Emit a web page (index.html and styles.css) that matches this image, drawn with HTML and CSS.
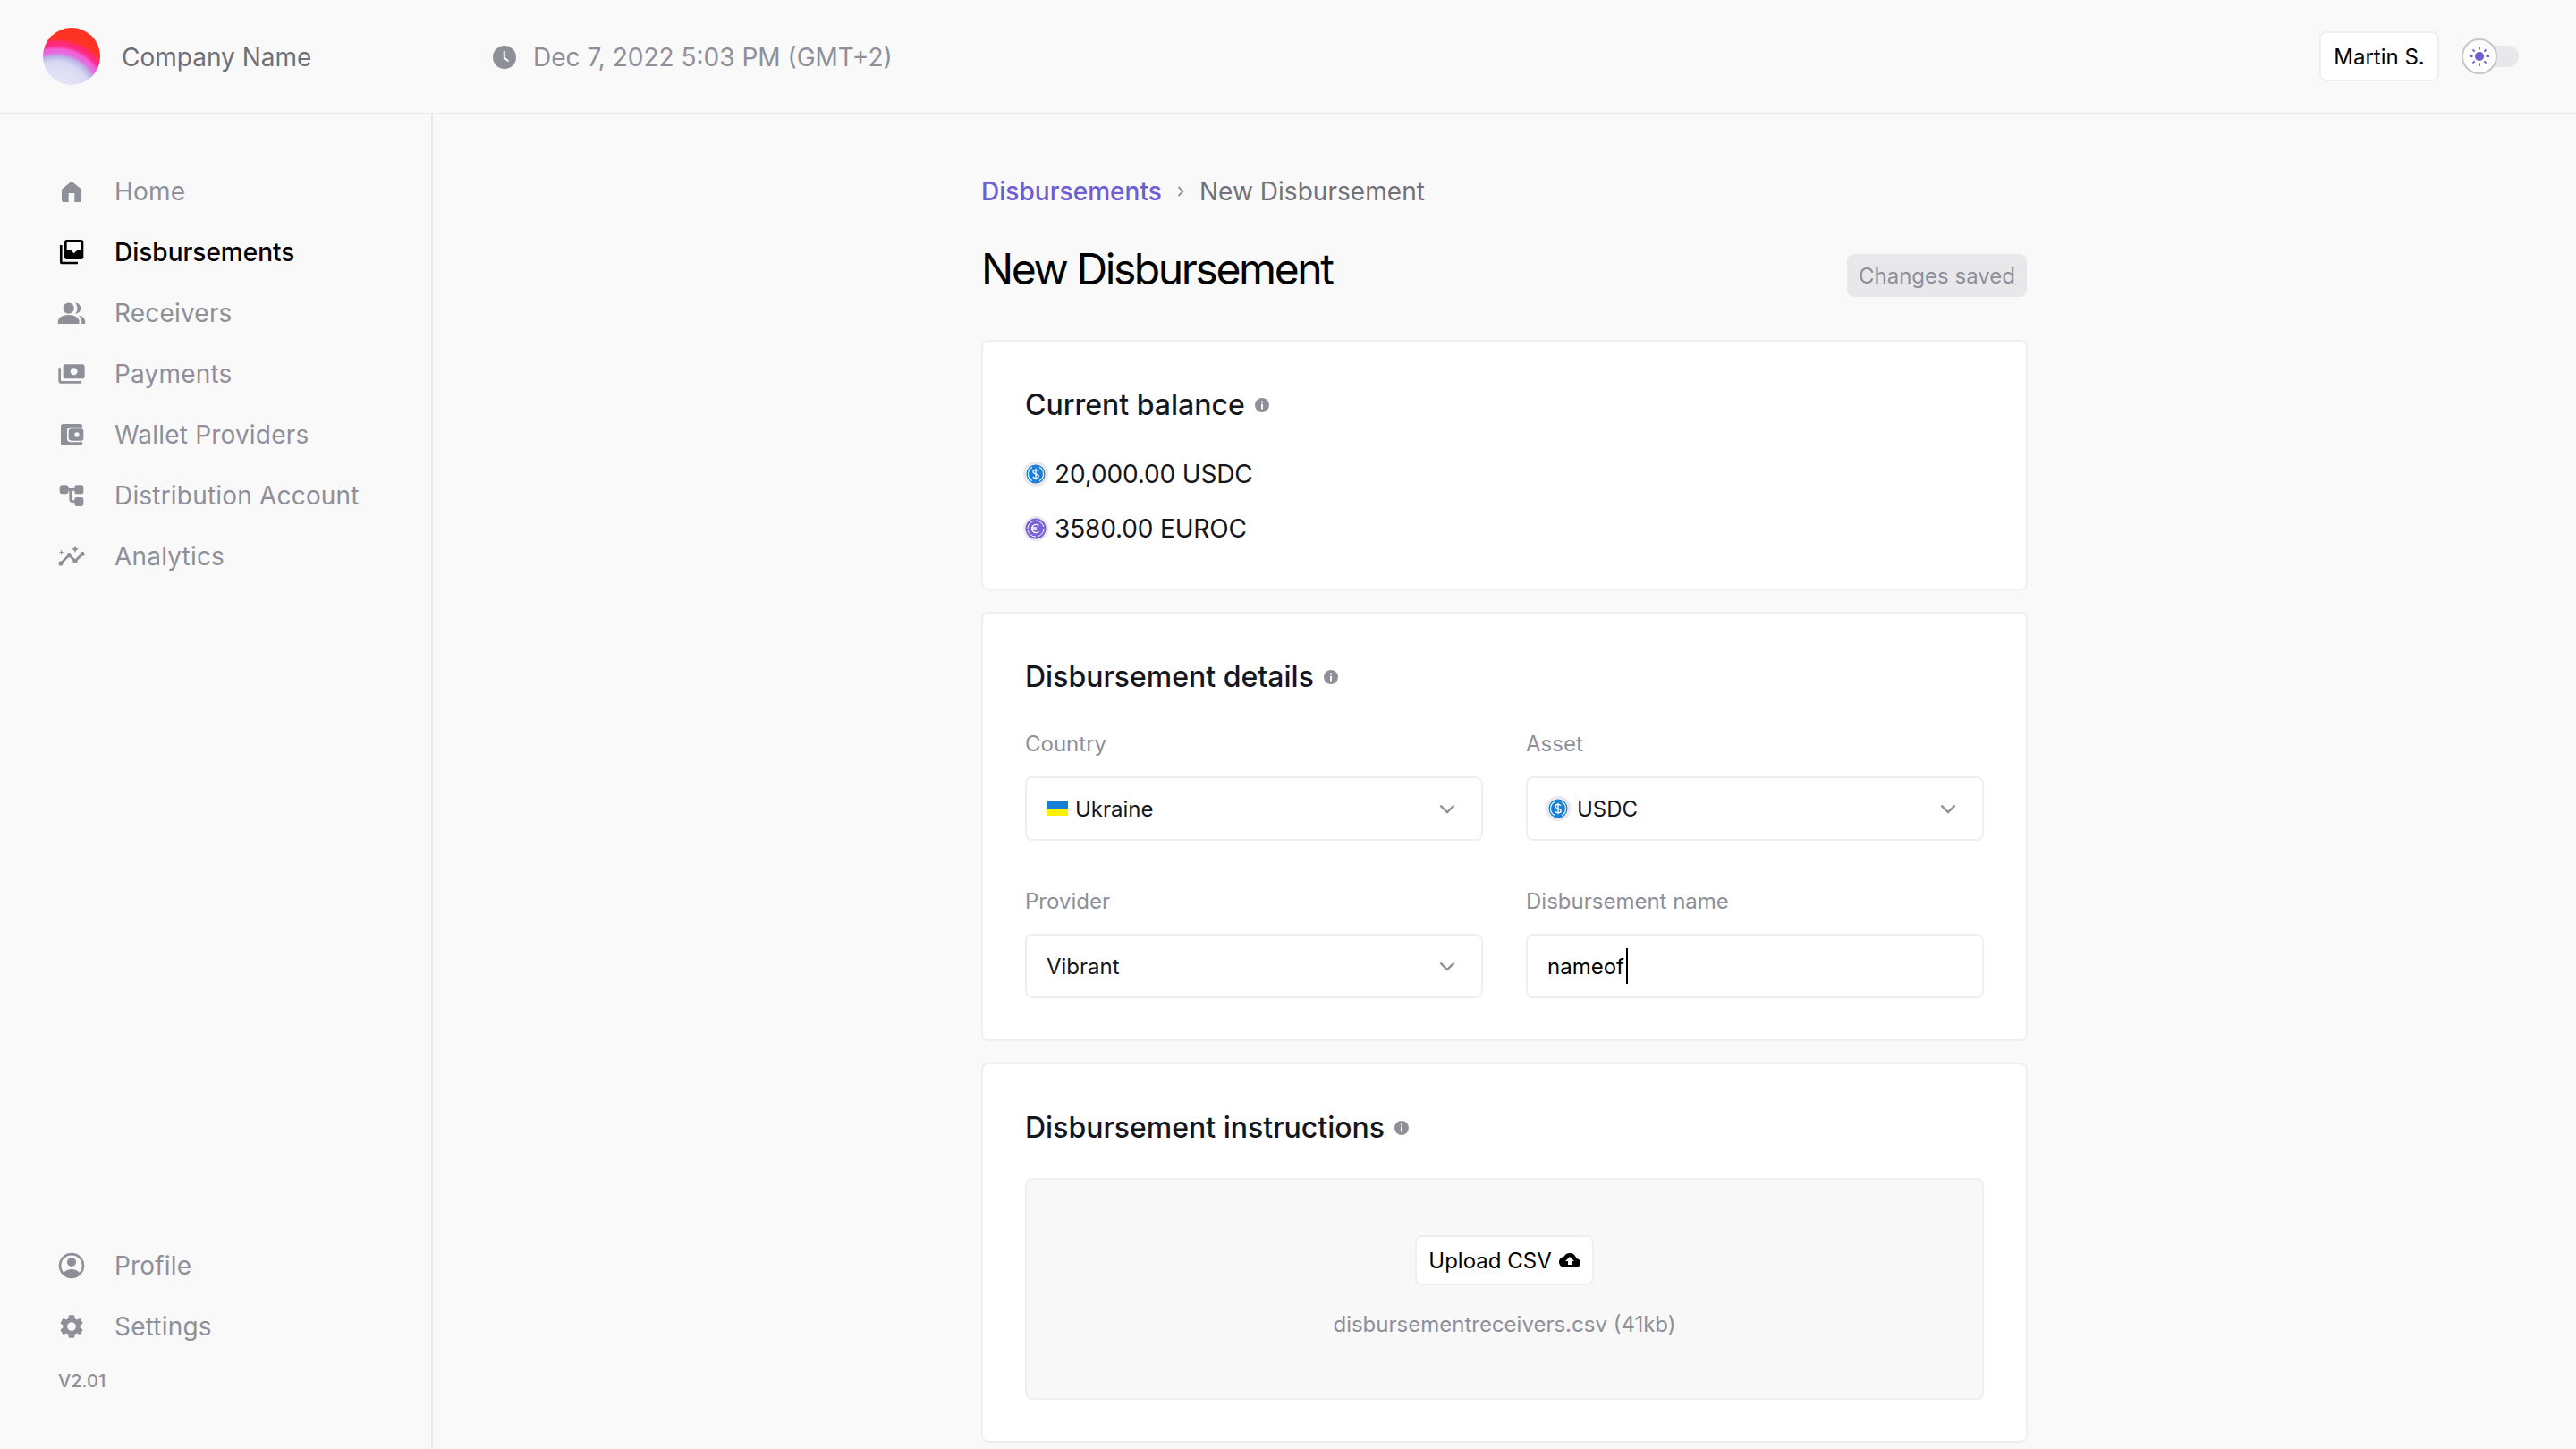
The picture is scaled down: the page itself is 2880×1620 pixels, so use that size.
FILE: index.html
```html
<!DOCTYPE html>
<html lang="en">
<head>
<meta charset="utf-8">
<title>New Disbursement</title>
<link rel="stylesheet" href="styles.css">
</head>
<body>
<svg class="defs" width="0" height="0" aria-hidden="true">
  <defs>
    <symbol id="info" viewBox="0 0 16 16"><path fill-rule="evenodd" d="M8 0a8 8 0 1 1 0 16A8 8 0 0 1 8 0zM7 3.400v2h2v-2zM7 6.800v5.800h2V6.800z"/></symbol>
    <symbol id="chev" viewBox="0 0 16 16"><path d="M2.500 5.500 8 11l5.500-5.500" fill="none" stroke="currentColor" stroke-width="1.700"/></symbol>
    <symbol id="usdc" viewBox="0 0 28 28">
      <circle cx="14" cy="14" r="14" fill="#e9e9ec"/>
      <circle cx="14" cy="14" r="10.500" fill="#1a7fd9"/>
      <path d="M10 6.500a8.500 8.500 0 0 0 0 15M18 6.500a8.500 8.500 0 0 1 0 15" fill="none" stroke="#fff" stroke-width="1.100"/>
      <path d="M17 10.800c-.6-1-1.700-1.500-3-1.500-1.800 0-3 .9-3 2.300 0 3.300 6.200 1.600 6.200 4.800 0 1.400-1.300 2.300-3.200 2.300-1.400 0-2.600-.6-3.200-1.600M14 7.800v12.400" fill="none" stroke="#fff" stroke-width="1.300"/>
    </symbol>
    <symbol id="euroc" viewBox="0 0 28 28">
      <circle cx="14" cy="14" r="14" fill="#e9e9f3"/>
      <circle cx="14" cy="14" r="11.500" fill="#7a62d6"/>
      <circle cx="14" cy="14" r="9" fill="none" stroke="#fff" stroke-width="1" stroke-dasharray="12 2"/>
      <path d="M17.500 10.800a4.600 4.600 0 1 0 0 6.400M9 13h6M9 15h6" fill="none" stroke="#fff" stroke-width="1.300"/>
    </symbol>
  </defs>
</svg>
<div class="app">
  <header class="topbar">
    <div class="brand">
      <span class="logo"></span>
      <span class="brand-name">Company Name</span>
    </div>
    <div class="clock">
      <svg class="clock-icon" viewBox="0 0 26 26"><path fill-rule="evenodd" d="M13 0a13 13 0 1 1 0 26A13 13 0 0 1 13 0zM11.800 6v8l5 4.200 1.300-1.500-4.300-3.600V6z"/></svg>
      <span>Dec 7, 2022 5:03 PM (GMT+2)</span>
    </div>
    <div class="top-right">
      <button class="user-btn">Martin S.</button>
      <div class="toggle">
        <span class="toggle-thumb">
          <svg class="sun" viewBox="0 0 24 24"><circle cx="12" cy="12" r="5"/><path d="M12 1v3.500M12 19.500V23M1 12h3.500M19.500 12H23M4.500 4.500l2.200 2.200M17.300 17.300l2.200 2.200M4.500 19.500l2.200-2.200M17.300 6.700l2.200-2.200" fill="none" stroke="#6e5dd3" stroke-width="1.800"/></svg>
        </span>
      </div>
    </div>
  </header>
  <div class="body">
    <aside class="sidebar">
      <nav class="nav">
        <a class="nav-item"><svg class="nav-icon" viewBox="0 0 24 24"><path d="M12 3.500 19.500 9.500q.8.6.8 1.600V19.500q0 1.500-1.500 1.500H14.500V13.500H9.500V21H5.250q-1.500 0-1.500-1.500V11.100q0-1 .8-1.600z"/></svg>Home</a>
        <a class="nav-item active"><svg class="nav-icon" viewBox="0 0 24 24"><path fill-rule="evenodd" d="M8 1.500h12a2 2 0 0 1 2 2V16a2 2 0 0 1-2 2H8a2 2 0 0 1-2-2V3.500a2 2 0 0 1 2-2zM8 3.500v7h3.500L14 13l2.500-2.500H20v-7z"/><path d="M2.200 6h2v14h13v2H4.200a2 2 0 0 1-2-2z"/></svg>Disbursements</a>
        <a class="nav-item"><svg class="nav-icon" viewBox="0 0 24 24"><circle cx="9.500" cy="8" r="4.600"/><path d="M.5 20c0-4.400 4-6.500 9-6.500s9 2.100 9 6.500c0 .6-.4 1-1 1h-16c-.6 0-1-.4-1-1z"/><path d="M15 3.300a4.700 4.700 0 0 1 0 9.400c1.200-1.300 1.800-2.900 1.800-4.700S16.200 4.600 15 3.300zM18 13.800c3.300.7 5.500 2.700 5.500 6.200 0 .6-.4 1-1 1h-2c.3-3-.6-5.400-2.500-7.200z"/></svg>Receivers</a>
        <a class="nav-item"><svg class="nav-icon" viewBox="0 0 24 24"><path transform="matrix(-1 0 0 1 24 0)" fill-rule="evenodd" d="M19 14V6c0-1.100-.9-2-2-2H3c-1.100 0-2 .9-2 2v8c0 1.100.9 2 2 2h14c1.100 0 2-.9 2-2zm-9-1c-1.660 0-3-1.340-3-3s1.340-3 3-3 3 1.340 3 3-1.340 3-3 3zm13-6v11c0 1.100-.9 2-2 2H4v-2h17V7h2z"/></svg>Payments</a>
        <a class="nav-item"><svg class="nav-icon" viewBox="0 0 24 24"><rect x="3" y="3" width="18" height="18" rx="2"/><rect x="8.200" y="5.800" width="14.600" height="12.400" rx="3" class="cutout"/><path fill-rule="evenodd" d="M12 7h8a2 2 0 0 1 2 2v6a2 2 0 0 1-2 2h-8a2.500 2.500 0 0 1-2.500-2.500v-5A2.500 2.500 0 0 1 12 7zM16.500 10a2 2 0 1 0 0 4 2 2 0 0 0 0-4z"/></svg>Wallet Providers</a>
        <a class="nav-item"><svg class="nav-icon" viewBox="0 0 24 24"><rect x="2" y="3.250" width="7.500" height="7.500" rx="2.500"/><rect x="14.500" y="3.250" width="7.500" height="7.500" rx="2"/><rect x="14.500" y="13.500" width="7.500" height="7.500" rx="2"/><path d="M9 7h6M11 7v8a2 2 0 0 0 2 2h2" class="wire"/></svg>Distribution Account</a>
        <a class="nav-item"><svg class="nav-icon" viewBox="0 0 24 24"><path d="M21 8c-1.450 0-2.260 1.440-1.930 2.510l-3.550 3.560c-.3-.09-.74-.09-1.040 0l-2.550-2.550C12.270 10.450 11.460 9 10 9c-1.450 0-2.270 1.440-1.930 2.520l-4.560 4.550C2.440 15.740 1 16.550 1 18c0 1.100.9 2 2 2 1.450 0 2.260-1.440 1.930-2.510l4.550-4.560c.3.09.74.09 1.040 0l2.550 2.550C12.730 16.550 13.540 18 15 18c1.450 0 2.270-1.440 1.930-2.520l3.560-3.550c1.070.33 2.510-.48 2.510-1.930 0-1.100-.9-2-2-2z"/><path d="M15 9l.94-2.070L18 6l-2.060-.93L15 3l-.92 2.070L12 6l2.080.93zM3.500 11L4 9l2-.5L4 8l-.5-2L3 8l-2 .5L3 9z"/></svg>Analytics</a>
      </nav>
      <div class="side-bottom">
        <a class="nav-item"><svg class="nav-icon" viewBox="0 0 24 24"><circle cx="12" cy="12" r="9.700" fill="none" stroke="#8f8f99" stroke-width="2"/><circle cx="12" cy="9" r="3.800"/><path d="M4.800 18.500C6.400 16.200 9 15 12 15s5.600 1.200 7.200 3.500A9.700 9.700 0 0 1 12 21.700a9.700 9.700 0 0 1-7.200-3.200z"/></svg>Profile</a>
        <a class="nav-item"><svg class="nav-icon" viewBox="0 0 24 24"><path fill-rule="evenodd" d="M19.140 12.940c.04-.3.06-.61.06-.94 0-.32-.02-.64-.07-.94l2.030-1.580c.18-.14.23-.41.12-.61l-1.920-3.320c-.12-.22-.37-.29-.59-.22l-2.390.96c-.5-.38-1.030-.7-1.620-.94l-.36-2.540c-.04-.24-.24-.41-.48-.41h-3.840c-.24 0-.43.17-.47.41l-.36 2.540c-.59.24-1.130.57-1.620.94l-2.390-.96c-.22-.08-.47 0-.59.22L2.740 8.870c-.12.21-.08.47.12.61l2.030 1.580c-.05.3-.09.63-.09.94s.02.64.07.94l-2.030 1.580c-.18.14-.23.41-.12.61l1.920 3.320c.12.22.37.29.59.22l2.390-.96c.5.38 1.030.7 1.620.94l.36 2.540c.05.24.24.41.48.41h3.840c.24 0 .44-.17.47-.41l.36-2.540c.59-.24 1.130-.56 1.620-.94l2.390.96c.22.08.47 0 .59-.22l1.920-3.320c.12-.22.07-.47-.12-.61l-2.010-1.580zM12 15.600c-1.980 0-3.600-1.620-3.600-3.600s1.620-3.600 3.600-3.600 3.600 1.620 3.600 3.600-1.620 3.600-3.600 3.600z"/></svg>Settings</a>
        <div class="version">V2.01</div>
      </div>
    </aside>
    <main class="main">
      <div class="content">
        <div class="crumbs">
          <a class="crumb-link">Disbursements</a>
          <svg class="crumb-sep" viewBox="0 0 12 12"><path d="M3.500 1 8.500 6l-5 5" fill="none" stroke="currentColor" stroke-width="1.800"/></svg>
          <span>New Disbursement</span>
        </div>
        <div class="title-row">
          <h1 class="title">New Disbursement</h1>
          <span class="badge">Changes saved</span>
        </div>
        <section class="card card-balance">
          <h2 class="card-title">Current balance <svg class="info"><use href="#info"/></svg></h2>
          <div class="balances">
            <div class="balance"><svg class="coin"><use href="#usdc"/></svg>20,000.00 USDC</div>
            <div class="balance"><svg class="coin"><use href="#euroc"/></svg>3580.00 EUROC</div>
          </div>
        </section>
        <section class="card">
          <h2 class="card-title">Disbursement details <svg class="info"><use href="#info"/></svg></h2>
          <div class="form-grid">
            <div class="field">
              <label class="field-label">Country</label>
              <div class="select">
                <svg class="flag" viewBox="0 0 24 16"><rect width="24" height="8" fill="#157fd6"/><rect y="8" width="24" height="8" fill="#fff200"/></svg>
                <span class="select-value">Ukraine</span>
                <svg class="chev"><use href="#chev"/></svg>
              </div>
            </div>
            <div class="field">
              <label class="field-label">Asset</label>
              <div class="select">
                <svg class="coin select-coin"><use href="#usdc"/></svg>
                <span class="select-value">USDC</span>
                <svg class="chev"><use href="#chev"/></svg>
              </div>
            </div>
            <div class="field">
              <label class="field-label">Provider</label>
              <div class="select">
                <span class="select-value">Vibrant</span>
                <svg class="chev"><use href="#chev"/></svg>
              </div>
            </div>
            <div class="field">
              <label class="field-label">Disbursement name</label>
              <div class="select text-input"><span>nameof</span><span class="caret"></span></div>
            </div>
          </div>
        </section>
        <section class="card">
          <h2 class="card-title">Disbursement instructions <svg class="info"><use href="#info"/></svg></h2>
          <div class="dropzone">
            <button class="upload-btn">Upload CSV
              <svg class="upload-icon" viewBox="0 0 24 24"><path fill-rule="evenodd" d="M19.350 10.040C18.670 6.590 15.640 4 12 4 9.110 4 6.600 5.640 5.350 8.040 2.340 8.360 0 10.910 0 14c0 3.310 2.690 6 6 6h13c2.760 0 5-2.240 5-5 0-2.640-2.050-4.780-4.650-4.960zM14 13v4h-4v-4H7l5-5 5 5h-3z"/></svg>
            </button>
            <div class="file-name">disbursementreceivers.csv (41kb)</div>
          </div>
        </section>
      </div>
    </main>
  </div>
</div>
</body>
</html>
```
FILE: styles.css
```css
* { box-sizing: border-box; }
html, body { margin: 0; padding: 0; height: 100%; }
body {
  background: #f9f9f9;
  color: #16161d;
  font-family: Inter, "Liberation Sans", sans-serif;
  font-size: 28px;
  overflow: hidden;
}
.defs { position: absolute; }
.app { display: flex; flex-direction: column; height: 1620px; }

.topbar {
  display: flex;
  align-items: center;
  height: 128px;
  flex: none;
  padding: 1px 48px 0;
  border-bottom: 2px solid #e9e9eb;
}
.brand { display: flex; align-items: center; gap: 24px; width: 503px; }
.logo {
  width: 64px;
  height: 64px;
  margin-top: -1px;
  border-radius: 50%;
  background: radial-gradient(circle at 15px 78px, #e8e8f8 0, #e2e2f6 25px, #d8d8f3 40px, #b9b3e6 46px, #e86adf 50px, #ee62d8 54px, #ff2a8a 58px, #ff2a70 62px, #ff3322 66px);
}
.brand-name { color: #6f6f78; }
.clock { display: flex; align-items: center; gap: 19px; color: #8f8f99; }
.clock-icon { width: 26px; height: 26px; fill: #8f8f99; }
.top-right { margin-left: auto; display: flex; align-items: center; gap: 25px; padding-right: 16px; margin-top: -1px; }
.user-btn {
  height: 56px;
  width: 134px;
  border: 2px solid #efeff0;
  border-radius: 8px;
  background: #fff;
  color: #000;
  font: 400 24px Inter, sans-serif;
  padding: 0;
}
.toggle { position: relative; width: 64px; height: 40px; display: flex; align-items: center; justify-content: flex-end; }
.toggle::before {
  content: "";
  width: 48px;
  height: 24px;
  border-radius: 12px;
  background: #e8e8ea;
}
.toggle-thumb {
  position: absolute;
  left: 0;
  top: 0;
  width: 40px;
  height: 40px;
  display: flex;
  align-items: center;
  justify-content: center;
  border-radius: 50%;
  background: #fff;
  border: 2px solid #c6c6cc;
}
.sun { width: 24px; height: 24px; fill: #6e5dd3; }

.body { display: flex; flex: 1; min-height: 0; }
.sidebar {
  width: 484px;
  flex: none;
  display: flex;
  flex-direction: column;
  justify-content: space-between;
  padding: 52px 0 61px;
  border-right: 2px solid #e9e9eb;
}
.nav-item {
  display: flex;
  align-items: center;
  height: 68px;
  padding-left: 64px;
  gap: 32px;
  color: #8f8f99;
  letter-spacing: 0.19px;
}
.nav-item.active { color: #000; font-weight: 500; letter-spacing: 0; }
.nav-icon { width: 32px; height: 32px; fill: #8f8f99; flex: none; }
.active .nav-icon { fill: #000; }
.cutout { fill: #f9f9f9; }
.wire { fill: none; stroke: #8f8f99; stroke-width: 2; }
.version { margin: 12px 0 0 65px; font-size: 20px; font-weight: 500; line-height: 30px; color: #8f8f99; }

.main { flex: 1; min-width: 0; display: flex; justify-content: center; padding-top: 68px; }
.content { width: 1170px; }
.crumbs { display: flex; align-items: center; height: 36px; color: #71717a; letter-spacing: 0.04px; }
.crumb-link { color: #6e5dd3; font-weight: 500; }
.crumb-sep { width: 12px; height: 12px; margin: 0 15px; color: #8f8f99; }
.title-row { display: flex; justify-content: space-between; align-items: flex-end; margin: 36px 0 46px; }
.title { margin: 0; font-size: 48px; line-height: 66px; font-weight: 400; letter-spacing: -2.400px; color: #000; }
.badge {
  display: flex;
  align-items: center;
  height: 48px;
  margin: 0 1px 2px 0;
  padding: 0 13px;
  border-radius: 8px;
  background: #e8e8ea;
  color: #8f8f99;
  font-size: 24px;
}
.card {
  background: #fff;
  border: 2px solid #efeff0;
  border-radius: 8px;
  padding: 47px 47px 46px;
  margin-bottom: 24px;
}
.card-balance { padding-bottom: 47px; }
.card-title {
  margin: 0;
  display: flex;
  align-items: center;
  gap: 11px;
  font-size: 32px;
  line-height: 48px;
  font-weight: 500;
  color: #16161d;
}
.info { width: 16px; height: 16px; fill: #8f8f99; }
.balances { margin-top: 33px; display: flex; flex-direction: column; gap: 21px; }
.balance { display: flex; align-items: center; gap: 7px; height: 40px; margin-left: -2px; letter-spacing: -0.15px; }
.coin { width: 28px; height: 28px; flex: none; }
.form-grid { margin-top: 33px; display: grid; grid-template-columns: 1fr 1fr; column-gap: 48px; row-gap: 50px; }
.field-label { display: block; height: 36px; line-height: 36px; margin-bottom: 18px; font-size: 24px; color: #8f8f99; }
.select {
  display: flex;
  align-items: center;
  gap: 8px;
  height: 72px;
  padding: 0 22px;
  background: #fff;
  border: 2px solid #efeff0;
  border-radius: 8px;
  font-size: 24px;
}
.select-value { flex: 1; }
.select-coin { margin-left: -2px; margin-right: -1px; }
.flag { width: 24px; height: 16px; flex: none; }
.chev { width: 22px; height: 22px; color: #8f8f99; flex: none; margin-right: 5px; }
.text-input { gap: 0; color: #000; }
.caret { width: 2px; height: 40px; background: #000; margin-left: 2px; }
.dropzone {
  margin-top: 32px;
  height: 248px;
  padding-top: 62px;
  display: flex;
  flex-direction: column;
  align-items: center;
  background: #f8f8f8;
  border: 2px solid #efeff0;
  border-radius: 8px;
}
.upload-btn {
  display: flex;
  align-items: center;
  justify-content: center;
  gap: 8px;
  height: 56px;
  width: 200px;
  padding: 0;
  background: #fff;
  border: 2px solid #efeff0;
  border-radius: 8px;
  color: #000;
  font: 400 24px Inter, sans-serif;
}
.upload-icon { width: 24px; height: 24px; fill: #000; }
.file-name { margin-top: 26px; line-height: 36px; font-size: 24px; color: #8f8f99; }
```
